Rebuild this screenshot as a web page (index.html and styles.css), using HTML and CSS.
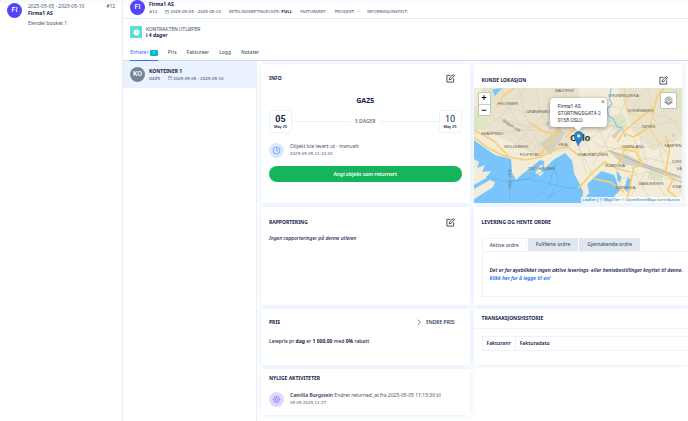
FILE: index.html
```html
<!DOCTYPE html>
<html lang="no">
<head>
    <meta charset="UTF-8">
    <meta name="viewport" content="width=device-width, initial-scale=1.0">
    <title>Kontrakt #12 - Firma1 AS</title>
    <link rel="stylesheet" href="styles.css">
</head>
<body>
    <svg class="defs" aria-hidden="true">
        <symbol id="edit" viewBox="0 0 20 20">
            <path d="M10 3H2v15h15v-8M7 13l1-4 8-8 3 3-8 8zM14 3l3 3"/>
        </symbol>
        <symbol id="calendar" viewBox="0 0 12 12">
            <path d="M1 2h10v9H1zM1 4h10M3 0v3M9 0v3"/>
        </symbol>
    </svg>
    <div class="app">
        <aside class="sidebar">
            <div class="contract">
                <span class="avatar">FI</span>
                <div class="contract-text">
                    <div class="contract-top"><span>2025-05-05 - 2025-05-10</span><span class="tiny">#12</span></div>
                    <strong>Firma1 AS</strong>
                    <p>Eiendel booket 1</p>
                </div>
            </div>
        </aside>

        <main class="main">
            <header class="header">
                <span class="avatar">FI</span>
                <div class="header-text">
                    <strong>Firma1 AS</strong>
                    <div class="facts">
                        <b>#12</b>
                        <b class="dates"><svg class="cal"><use href="#calendar"/></svg>2025-05-05 - 2025-05-10</b>
                        <span>BETALINGSBETINGELSER: <b>FULL</b></span>
                        <span>FAKTURAREF:</span>
                        <span>PROSJEKT: &nbsp;-</span>
                        <span>INFORMASJONSFELT:</span>
                    </div>
                </div>
            </header>

            <div class="expires">
                <span class="expires-icon">
                    <svg viewBox="0 0 12 12"><circle cx="6" cy="6" r="5" fill="#fff"/><path d="M6 3v3l2 1" fill="none" stroke="#5edbd9"/></svg>
                </span>
                <div>
                    <div class="tiny">KONTRAKTEN UTLØPER</div>
                    <strong>i 4 dager</strong>
                </div>
            </div>

            <nav class="tabs">
                <a class="active" href="#enheter">Enheter <span class="badge">1</span></a>
                <a href="#pris">Pris</a>
                <a href="#fakturaer">Fakturaer</a>
                <a href="#logg">Logg</a>
                <a href="#notater">Notater</a>
            </nav>

            <div class="body">
                <section class="units" id="enheter">
                    <a class="unit" href="#konteiner">
                        <span class="avatar grey">KO</span>
                        <div>
                            <strong>KONTEINER 1</strong>
                            <div class="facts"><b>GAZ5</b><b class="dates"><svg class="cal"><use href="#calendar"/></svg>2025-05-05 - 2025-05-10</b></div>
                        </div>
                    </a>
                </section>

                <div class="grid">
                    <section class="card info">
                        <div class="card-head">
                            <h2>INFO</h2>
                            <button class="icon-btn" aria-label="Rediger info"><svg><use href="#edit"/></svg></button>
                        </div>
                        <h3>GAZ5</h3>
                        <div class="period">
                            <div class="day"><b>05</b><span>May 25</span></div>
                            <span class="length">5 DAGER</span>
                            <div class="day"><b class="light">10</b><span>May 25</span></div>
                        </div>
                        <div class="event">
                            <span class="event-icon blue"><svg viewBox="0 0 16 16"><circle cx="8" cy="8" r="6"/><path d="M8 4v4l3 1"/></svg></span>
                            <div>
                                <p>Objekt ble levert ut - manuelt</p>
                                <time>2025-05-05 11:10:20</time>
                            </div>
                        </div>
                        <button class="return-btn">Angi objekt som returnert</button>
                    </section>

                    <section class="card location">
                        <div class="card-head">
                            <h2>KUNDE LOKASJON</h2>
                            <button class="icon-btn" aria-label="Rediger lokasjon"><svg><use href="#edit"/></svg></button>
                        </div>
                        <div class="map">
                            <svg class="map-tiles" viewBox="0 0 208 115" preserveAspectRatio="xMidYMid slice">
                                <rect width="208" height="115" fill="#f2ecd8"/>
                                <path fill="#e9e2cd" d="M22 0h83v40L94 62 62 67 28 50 0 39V20zM145 0h63v48l-30 15-20-20z"/>
                                <path fill="#dce6c3" d="M8 0l20 0-4 12-18 6zM176 78l14 3-2 12-15-2zM132 30l16-5 6 13-14 5zM196 2h12v18h-9zM2 26l10 6-4 10H0V28z"/>
                                <!-- small streets -->
                                <path class="street" d="M28 0l8 21 18 29 17 17M45 0l5 25 17 37M62 0l4 22 18 38M80 0l-2 30 10 28M20 15l30 10 30-3 28-9M24 30l30 9 35-5 30-9M24 45l30-3 38 3 30-8M8 42l20-14 24-28M38 60l28-30 20-30M56 66l25-30 20-36M104 44l22 14 30 5 50-12M103 62l24-20 22-8 24-34M118 78l20-36 19-42M110 30l27 8 31 2 36-7M145 5l23 17 36 11M174 0l5 30 16 22 13 7M186 0l3 25 19 18M145 80l28-10 35 8M165 46l8 33 20 33M150 60l13 30 15 25M182 50l9 32 17 23M142 92l30-8 36 11M154 112l19-30 27-30M105 10l20 8 20 2M108 20l15 18 10 22M112 85l-10-35 4-12M120 90l-14-28M90 5l15 28 12 35M0 46l30-4 28 14"/>
                                <!-- fjord -->
                                <path class="water" d="M0 52l11 8 10 7 16 4 1 14 4 7 5-5 9-7 10-8 4 1 0 8 9-9 12-7 7 8 2 13 5 9 4 9-2 12H0z"/>
                                <path class="water" d="M106 115l9-10-2-9 14-13 13 4 3 9 3 6-6 6-2 7zM142 82l5 7-1 6-3-3zM157 91l-4 13-3-3 3-11zM18 2l10-2-7 8zM72 35l3-1-2 4zM198 46l2 1-1 2z"/>
                                <path fill="#f2ecd8" d="M0 71l5 3-2 6 8-3-3 7 9-1-5 7-12 7zM0 101l16-9 5 2-2 5-19 12zM61 81l8-5-2 7 3 1-4 4-5-3 2-2z"/>
                                <path class="ferry" d="M36 72l1 18-2 25M38 93l18-2 30 7 20 5M82 73l-7 24-20 18M12 88l23 6 20-4 28-13M72 110l19-11 13 1M82 82l2 12-10 18"/>
                                <path class="creek" d="M137 0l-2 11 3 5-5 5 1 7 5 3 4 8 5 1 3 9"/>
                                <!-- railway yard -->
                                <path fill="#d4d0c4" d="M133 62l20 5 18 9 35 12v3l-40-12-18-3zM66 56l18-15 7 4-15 22zM137 48l9-8 2 2-8 9z"/>
                                <path class="rail" d="M133 62l25 10 50 18M150 68l24 12 34 14"/>
                                <path class="road" d="M0 49l14 11 16 8 21 4 15-3 18-9 10-1 10 8M0 42l20 11 15 16M66 70l5-12 8-9 10-15M22 19l8-12 11-7M91 50l12-12 26-4M148 61l14 3 5 13-8 3-4 22-4 13M104 100l14-15 12-11 14 7 12 3M120 91l16 3 14 10M143 54l6-10 18-15 13-10 3-11 7-8M149 45l10 4 13-8 6-6M191 48l4 13-4 25 8 5-6 11 11 9M144 76l7-17 11 1M56 35l12 8 17 5"/>
                                <path class="road thin" d="M150 0l2 24 15 5M180 19l-5 22 18 25M160 51l8 24M104 67l28-3 15-5"/>
                                <g class="places">
                                    <text x="24" y="17">FROGNER</text>
                                    <text x="52" y="25">URANIENBORG</text>
                                    <text x="81" y="4">MAJORST</text>
                                    <text x="7" y="47">SKARPSNO</text>
                                    <text x="30" y="60">SKILLEBEKK</text>
                                    <text x="46" y="68">FILIPSTAD</text>
                                    <text x="54" y="82">TJUVHOLMEN</text>
                                    <text x="84" y="58">VIKA</text>
                                    <text x="134" y="9">GRÜNERLØKKA</text>
                                    <text x="153" y="24">SOFIENBERG</text>
                                    <text x="167" y="40">TØYEN</text>
                                    <text x="147" y="60">GRØNLAND</text>
                                    <text x="190" y="59">KAMPEN</text>
                                    <text x="104" y="68">KVADRATUREN</text>
                                    <text x="131" y="79">BJØRVIKA</text>
                                    <text x="141" y="101">SØRENGA</text>
                                    <text x="164" y="97">GAMLEBYEN</text>
                                    <text x="197" y="75">JORD</text>
                                    <text x="202" y="82">VÅ</text>
                                    <text x="198" y="100">KVÆ</text>
                                    <text transform="translate(28 33) rotate(33)">Skøyen alle</text>
                                    <text transform="translate(34 82) rotate(88)">Kiel - Oslo</text>
                                </g>
                                <text class="city" x="96" y="53">Oslo</text>
                                <path fill="#2a81cb" stroke="#1d5f9c" stroke-width=".5" d="M104 58c-1-4-4-6-4-10a4.500 4.500 0 0 1 9 0c0 4-4 6-5 10z"/>
                                <circle cx="104.500" cy="48" r="1.600" fill="#fff"/>
                            </svg>
                            <div class="zoom">
                                <button aria-label="Zoom inn">+</button>
                                <button aria-label="Zoom ut">−</button>
                            </div>
                            <button class="layers" aria-label="Kartlag">
                                <svg viewBox="0 0 20 20"><path fill="#777" d="M2 13l8 5 8-5-2-1-6 4-6-4z"/><path fill="#999" d="M2 10l8 5 8-5-2-1-6 4-6-4z"/><path fill="#bbb" d="M10 2l8 5-8 5-8-5z"/></svg>
                            </button>
                            <div class="popup">
                                Firma1 AS<br>STORTINGSGATA 2<br>0158 OSLO
                                <button aria-label="Lukk">×</button>
                            </div>
                            <div class="credits"><a href="#leaflet">Leaflet</a> | <a href="#maptiler">© MapTiler</a> <a href="#osm">© OpenStreetMap contributors</a></div>
                        </div>
                    </section>

                    <section class="card"></section>

                    <section class="card">
                        <div class="card-head">
                            <h2>RAPPORTERING</h2>
                            <button class="icon-btn" aria-label="Rediger rapportering"><svg><use href="#edit"/></svg></button>
                        </div>
                        <p class="empty">Ingen rapporteringer på denne utleien</p>
                    </section>

                    <section class="card wide orders">
                        <div class="card-head"><h2>LEVERING OG HENTE ORDRE</h2></div>
                        <div class="order-tabs">
                            <button class="selected">Aktive ordre</button>
                            <button>Fullførte ordre</button>
                            <button>Gjentakende ordre</button>
                        </div>
                        <div class="order-panel">
                            <p>Det er for øyeblikket ingen aktive leverings- eller hentebestillinger knyttet til denne.</p>
                            <a href="#ny-ordre">Klikk her for å legge til en!</a>
                        </div>
                    </section>

                    <section class="card" id="pris">
                        <div class="card-head">
                            <h2>PRIS</h2>
                            <button class="text-btn"><svg viewBox="0 0 6 10"><path d="M1 1l4 4-4 4"/></svg>ENDRE PRIS</button>
                        </div>
                        <p class="price">Leiepris pr <b>dag</b> er <b>1 000,00</b> med <b>0%</b> rabatt</p>
                    </section>

                    <section class="card wide history">
                        <div class="card-head"><h2>TRANSAKSJONSHISTORIE</h2></div>
                        <table>
                            <tr><th class="nr">Fakturanr</th><th>Fakturadato</th></tr>
                        </table>
                    </section>

                    <section class="card activity">
                        <div class="card-head"><h2>NYLIGE AKTIVITETER</h2></div>
                        <div class="event">
                            <span class="event-icon purple"><svg viewBox="0 0 16 16"><circle cx="8" cy="8" r="5"/><circle cx="8" cy="8" r="2"/><path d="M8 1v2M8 13v2M1 8h2M13 8h2M3 3l2 2M11 11l2 2M13 3l-2 2M5 11l-2 2"/></svg></span>
                            <div>
                                <p><b>Camilla Borgstein</b> Endret returned_at fra 2025-05-05 11:15:30 til</p>
                                <time>05-05-2025 11:17</time>
                            </div>
                        </div>
                    </section>
                </div>
            </div>
        </main>
    </div>
</body>
</html>
```

FILE: styles.css
```css
* {
    box-sizing: border-box;
}
body {
    margin: 0;
    font-family: "Noto Sans", "Open Sans", sans-serif;
    font-size: 5px;
    line-height: 7px;
    color: #14254a;
    background-color: #fff;
    overflow: hidden;
}
h2, h3, p {
    margin: 0;
    font-size: 5px;
}
p {
    font-weight: 400;
}
a {
    color: inherit;
    text-decoration: none;
}
button {
    padding: 0;
    border: none;
    background: none;
    font: inherit;
    color: inherit;
    cursor: pointer;
}
b, strong {
    font-weight: 700;
}
strong {
    display: block;
}
.defs {
    display: none;
}
.app {
    display: flex;
    min-height: 100vh;
    background: linear-gradient(#f6f8fe, #fff 5px);
}
.avatar {
    flex: none;
    display: flex;
    align-items: center;
    justify-content: center;
    width: 15px;
    height: 15px;
    border-radius: 50%;
    background-color: #5346f8;
    color: #fff;
    font-family: Roboto, sans-serif;
    font-size: 7px;
    font-weight: 500;
}
.avatar.grey {
    background-color: #77859b;
}
.tiny {
    font-family: Roboto, sans-serif;
}
.facts, .event time {
    font-family: "DejaVu Sans", sans-serif;
    font-size: 4px;
}

/* sidebar */
.sidebar {
    width: 122px;
    flex: none;
    padding: 3px 7px;
}
.contract {
    display: flex;
    gap: 6px;
}
.contract-text {
    flex: 1;
}
.contract-top {
    display: flex;
    justify-content: space-between;
    color: #46556c;
}
.contract p {
    margin-top: 3px;
    color: #46556c;
}

/* contract header */
.main {
    flex: 1;
    min-width: 0;
    border-left: 1px solid #e6ecf5;
}
.header {
    display: flex;
    gap: 4px;
    height: 19px;
    padding: 0 7px;
    border-bottom: 1px solid #e6ecf5;
    white-space: nowrap;
}
.header-text {
    padding-top: 1px;
}
.facts {
    display: flex;
    gap: 8px;
    color: #46556c;
}
.facts b {
    color: #2c3c5a;
    font-weight: 400;
}
.facts span b {
    font-weight: 700;
}
.dates {
    display: flex;
    align-items: center;
    gap: 1px;
}
.cal {
    flex: none;
    width: 4px;
    height: 4px;
    fill: none;
    stroke: #46556c;
}
.expires {
    display: flex;
    align-items: center;
    gap: 4px;
    padding: 7px;
    line-height: 6px;
}
.expires .tiny {
    color: #46556c;
}
.expires-icon {
    display: flex;
    align-items: center;
    justify-content: center;
    width: 12px;
    height: 12px;
    border-radius: 1px;
    background-color: #5edbd9;
}
.expires-icon svg {
    width: 7px;
}
.tabs {
    display: flex;
    gap: 10px;
    height: 16px;
    padding: 0 7px;
    border-bottom: 1px solid #d3dbe9;
    color: #35445e;
    line-height: 14px;
}
.tabs .active {
    height: 16px;
    border-bottom: 1px solid #2f76f5;
    color: #2f76f5;
}
.badge {
    display: inline-block;
    width: 8px;
    border-radius: 1px;
    background-color: #06b6d4;
    color: #fff;
    font-size: 4px;
    line-height: 6px;
    text-align: center;
}

/* unit list */
.body {
    display: flex;
}
.units {
    width: 134px;
    flex: none;
    border-right: 1px solid #e9eff9;
}
.unit {
    display: flex;
    align-items: center;
    gap: 4px;
    height: 27px;
    padding: 0 7px;
    background-color: #eaf2ff;
}

/* cards */
.grid {
    flex: 1;
    min-width: 0;
    display: grid;
    grid-template-columns: minmax(0, 1fr) minmax(0, 1fr) 2px;
    grid-template-rows: 139px 98px 56px 46px;
    gap: 4px;
    padding: 3px 0 6px 4px;
}
.card {
    min-width: 0;
    background-color: #fff;
    box-shadow: 0 0 6px #dfeafb;
}
.wide {
    grid-column: span 2;
}
.card-head {
    display: flex;
    align-items: center;
    justify-content: space-between;
    padding: 10px 15px 0 8px;
    height: 20px;
}
h2, h3 {
    font-weight: 700;
}
.icon-btn, .icon-btn svg {
    display: block;
    width: 9px;
    height: 9px;
    fill: none;
    stroke: #35445e;
    stroke-width: 2px;
}
.info .card-head {
    padding-top: 8px;
}
.info h3 {
    margin-top: 12px;
    font-size: 7px;
    line-height: 9px;
    text-align: center;
}
.period {
    display: flex;
    align-items: center;
    justify-content: space-between;
    margin: 5px 8px 0;
    background: linear-gradient(#eaf0fa, #eaf0fa) center / 100% 1px no-repeat;
}
.day {
    width: 23px;
    height: 23px;
    padding-top: 3px;
    border: 1px solid #edf2fb;
    border-radius: 3px;
    background-color: #fff;
    font-family: Roboto, sans-serif;
    text-align: center;
}
.day b, .day span {
    display: block;
}
.day b {
    font-size: 9px;
    font-weight: 700;
    line-height: 10px;
}
.day .light {
    font-weight: 400;
}
.day span {
    font-size: 4px;
    font-weight: 500;
    line-height: 6px;
}
.length {
    padding: 0 5px;
    background-color: #fff;
    color: #66758b;
    font-weight: 600;
}
.event {
    display: flex;
    align-items: center;
    gap: 6px;
    padding: 0 8px;
    color: #46556c;
    line-height: 8px;
    white-space: nowrap;
}
.event b {
    color: #2c3c5a;
    font-weight: 600;
}
.event time {
    display: block;
}
.info .event {
    margin-top: 9px;
}
.event-icon {
    flex: none;
    display: flex;
    align-items: center;
    justify-content: center;
    width: 15px;
    height: 15px;
    border-radius: 50%;
}
.event-icon svg {
    width: 9px;
    fill: none;
    stroke: currentColor;
    stroke-width: 1px;
}
.blue {
    background-color: #dbe8ff;
    color: #2f76f5;
}
.purple {
    background-color: #e0d9ff;
    color: #6d55f0;
}
.return-btn {
    display: block;
    width: calc(100% - 16px);
    height: 16px;
    margin: 8px 8px 0;
    border-radius: 8px;
    background-color: #17b55b;
    color: #fff;
    font-weight: 600;
}
.empty {
    padding: 8px;
    font-style: italic;
    font-weight: 500;
}

/* map */
.location {
    display: flex;
    flex-direction: column;
}
.location .card-head {
    height: 24px;
    padding-top: 8px;
    padding-right: 14px;
}
.map {
    position: relative;
    flex: 1;
    overflow: hidden;
    font-family: "Liberation Sans", Arial, sans-serif;
}
.map-tiles {
    display: block;
    width: 100%;
    height: 100%;
}
.water {
    fill: #79c5fb;
}
.street, .ferry, .creek, .rail, .road {
    fill: none;
}
.street {
    stroke: #d9d1bc;
    stroke-width: 0.6px;
}
.ferry {
    stroke: #61a9dc;
    stroke-width: 0.5px;
}
.creek {
    stroke: #79c5fb;
    stroke-width: 1px;
}
.rail {
    stroke: #aaa79f;
    stroke-width: 0.6px;
}
.road {
    stroke: #f7ce72;
    stroke-width: 1.6px;
    stroke-linejoin: round;
}
.road.thin {
    stroke-width: 0.8px;
}
.places {
    font-size: 4px;
    fill: #62615d;
}
.city {
    font-size: 9px;
    font-weight: 700;
    fill: #25282d;
}
.zoom {
    position: absolute;
    top: 4px;
    left: 4px;
    width: 13px;
    border: 1px solid #c5c3b9;
    border-radius: 1px;
    background-color: #fff;
}
.zoom button {
    display: block;
    width: 100%;
    height: 11px;
    color: #111;
    font-size: 9px;
    font-weight: 700;
    line-height: 11px;
}
.zoom button + button {
    border-top: 1px solid #ccc;
}
.layers {
    position: absolute;
    top: 4px;
    right: 5px;
    width: 17px;
    height: 17px;
    border: 1px solid #c5c3b9;
    border-radius: 1px;
    background-color: #fff;
}
.layers svg {
    display: block;
    width: 11px;
    margin: auto;
}
.popup {
    position: absolute;
    top: 10px;
    left: 50%;
    width: 57px;
    height: 29px;
    margin-left: -28px;
    padding: 5px 8px;
    border-radius: 4px;
    background-color: #fff;
    box-shadow: 0 1px 4px rgba(0, 0, 0, 0.4);
    color: #333;
    font-family: Roboto, sans-serif;
    white-space: nowrap;
}
.popup::after {
    content: "";
    position: absolute;
    top: 100%;
    left: 50%;
    margin-left: -4px;
    border: 4px solid transparent;
    border-top-color: #fff;
}
.popup button {
    position: absolute;
    top: 1px;
    right: 2px;
    color: #777;
    font-size: 7px;
}
.credits {
    position: absolute;
    right: 0;
    bottom: 0;
    padding: 0 2px;
    background-color: rgba(255, 255, 255, 0.8);
    font-family: "Noto Sans", sans-serif;
    font-size: 4px;
    line-height: 6px;
}
.credits a {
    color: #0078a8;
}

/* orders */
.orders .card-head {
    height: 20px;
}
.order-tabs {
    display: flex;
    gap: 1px;
    margin: 11px 0 0 8px;
}
.order-tabs button {
    height: 13px;
    padding: 0 8px;
    background-color: #e1e7ef;
    color: #46556c;
    font-weight: 500;
}
.order-tabs .selected {
    border: 1px solid #eef2f9;
    border-bottom: none;
    padding: 0 7px;
    background-color: #fff;
}
.order-panel {
    height: 46px;
    margin-left: 8px;
    padding: 14px 0 0 7px;
    border: 1px solid #eef2f9;
    border-right: none;
    font-style: italic;
    line-height: 8px;
    white-space: nowrap;
}
.order-panel p {
    font-weight: 600;
}
.order-panel a {
    display: block;
    color: #1766f5;
    font-weight: 600;
}

/* price, invoices, activity */
.text-btn {
    display: flex;
    align-items: center;
    gap: 5px;
    color: #35445e;
    font-weight: 600;
}
.text-btn svg {
    width: 4px;
    fill: none;
    stroke: currentColor;
}
#pris .card-head {
    padding-top: 7px;
}
.price {
    padding: 9px 8px;
    font-weight: 500;
}
.history .card-head {
    height: 20px;
    padding-top: 0;
    border-bottom: 1px solid #f0f4fa;
}
table {
    width: calc(100% - 8px);
    margin: 7px 0 0 8px;
    border-collapse: collapse;
}
th {
    height: 14px;
    padding: 0 4px;
    border: 1px solid #eef2f9;
    border-right: none;
    font-weight: 600;
    text-align: left;
}
.nr {
    width: 32px;
}
.activity .card-head {
    height: 18px;
    padding-top: 0;
}
.activity .event {
    margin-top: 4px;
}
```
